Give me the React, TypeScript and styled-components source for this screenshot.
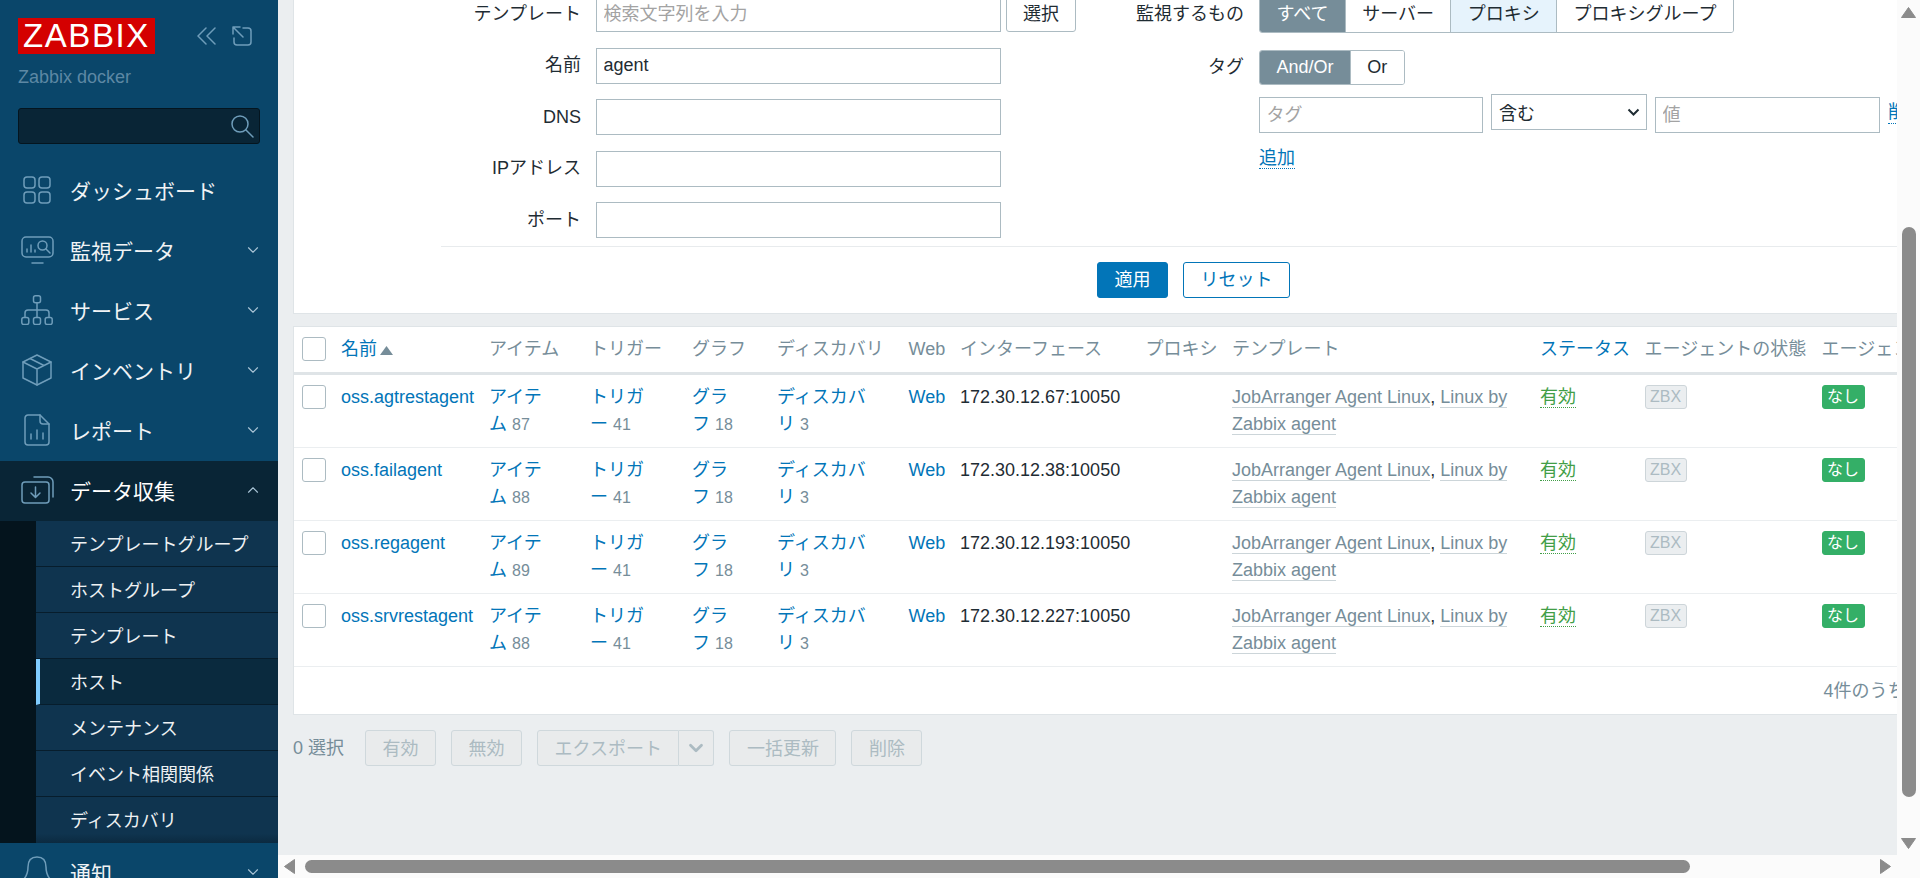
import * as React from "react";
import styled, { createGlobalStyle } from "styled-components";
import { ChevronDown, ChevronUp } from "lucide-react";

const GlobalStyle = createGlobalStyle`
  html, body {
    margin: 0;
    height: 100%;
    overflow: hidden;
    background: #ebeef0;
  }
  * { box-sizing: border-box; }
  body, input, select, button {
    font-family: "Liberation Sans", "Noto Sans CJK JP", sans-serif;
    font-size: 18px;
    color: #1f2c33;
  }
`;

const Shell = styled.div`
  display: flex;
  width: 1920px;
  height: 878px;
  overflow: hidden;
`;

/* ---- sidebar ---- */

const Sidebar = styled.aside`
  flex: 0 0 278px;
  height: 878px;
  overflow: hidden;
  background: #0a466a;
  padding-top: 18px;
`;

const BrandRow = styled.div`
  display: flex;
  align-items: center;
  padding-left: 18px;
  height: 36px;
`;

const Logo = styled.div`
  width: 137px;
  height: 36px;
  background: #d40000;
  color: #fff;
  font-size: 33px;
  line-height: 36px;
  letter-spacing: 1.6px;
  text-align: center;
`;

const BrandTools = styled.div`
  display: flex;
  align-items: center;
  gap: 15px;
  margin-left: 41px;
`;

const Subtitle = styled.div`
  margin: 10px 0 0 18px;
  height: 27px;
  line-height: 27px;
  color: #5d88a4;
`;

const SearchBox = styled.div`
  display: flex;
  align-items: center;
  justify-content: flex-end;
  width: 242px;
  height: 36px;
  margin: 17px 0 17px 18px;
  padding-right: 5px;
  background: #092536;
  border: 1px solid #04151f;
  border-radius: 3px;
`;

const NavItem = styled.div<{ $active?: boolean }>`
  display: flex;
  align-items: center;
  height: 60px;
  padding: 0 16px 2px 0;
  background: ${(p) => (p.$active ? "#092536" : "transparent")};
  color: ${(p) => (p.$active ? "#ffffff" : "#f0f3f5")};
  font-size: 21px;
`;

const NavIcon = styled.span`
  display: flex;
  justify-content: center;
  flex: 0 0 40px;
  margin: 0 13px 0 17px;
`;

const NavCaret = styled.span`
  display: flex;
  margin-left: auto;
  color: #a9c4d6;
`;

const SubMenu = styled.div`
  padding-left: 36px;
  background: #04141d;
`;

const SubItem = styled.div<{ $current?: boolean }>`
  height: 46px;
  display: flex;
  align-items: center;
  padding-bottom: 2px;
  padding-left: ${(p) => (p.$current ? "30px" : "34px")};
  border-left: ${(p) => (p.$current ? "4px solid #7fccff" : "none")};
  border-bottom: 1px solid #071d2c;
  background: ${(p) => (p.$current ? "#0a2a3e" : "#0f344f")};
  color: #eef1f3;
  &:last-child {
    border-bottom: none;
    background: linear-gradient(#0f344f 80%, #0b2a40);
  }
`;

const Line = styled.g`
  fill: none;
  stroke: #6f9dba;
  stroke-width: 1.5;
  stroke-linecap: round;
  stroke-linejoin: round;
`;

/* ---- main area ---- */

const Workspace = styled.div`
  flex: 1;
  min-width: 0;
  display: grid;
  grid-template-columns: 1619px 23px;
  grid-template-rows: 855px 23px;
`;

const Content = styled.main`
  overflow: hidden;
  background: #ebeef0;
  padding-left: 15px;
`;

const Panel = styled.section`
  width: 1812px;
  background: #fff;
  border: 1px solid #dfe4e7;
`;

const FilterPanel = styled(Panel)`
  margin-top: -4px;
  border-top: none;
  height: 318px;
`;

const FilterColumns = styled.div`
  display: flex;
  height: 250px;
`;

const LeftColumn = styled.div`
  display: flex;
  flex-direction: column;
  gap: 15.5px;
  flex: 0 0 806px;
`;

const RightColumn = styled.div`
  flex: 1;
`;

const FormRow = styled.div<{ $labelWidth: number; $top?: number }>`
  display: grid;
  grid-template-columns: ${(p) => p.$labelWidth}px 1fr;
  column-gap: 15px;
  align-items: center;
  margin-top: ${(p) => p.$top ?? 0}px;
`;

const FieldLabel = styled.label`
  text-align: right;
  line-height: 27px;
`;

const FieldLine = styled.div`
  display: flex;
  align-items: center;
  gap: 5px;
`;

const TextInput = styled.input<{ $width: number }>`
  width: ${(p) => p.$width}px;
  height: 36px;
  padding: 0 6.5px;
  background: #fff;
  border: 1px solid #acbbc2;
  outline: none;
  &::placeholder { color: #a3a3a3; opacity: 1; }
`;

const Button = styled.button<{ $primary?: boolean; $outline?: boolean; $narrow?: boolean }>`
  height: 36px;
  padding: 0 ${(p) => (p.$narrow ? "16px" : "16.5px")} 4px;
  border-radius: 3px;
  border: 1px solid ${(p) => (p.$primary || p.$outline ? "#0275b8" : "#acbbc2")};
  background: ${(p) => (p.$primary ? "#0275b8" : "#fff")};
  color: ${(p) => (p.$primary ? "#fff" : p.$outline ? "#0275b8" : "#1f2c33")};
`;

const Segments = styled.div`
  display: inline-flex;
  width: fit-content;
  border: 1px solid #acbbc2;
  border-radius: 3px;
  overflow: hidden;
`;

const Segment = styled.span<{ $on?: boolean; $tint?: boolean; $h: number }>`
  height: ${(p) => p.$h}px;
  line-height: ${(p) => p.$h}px;
  padding: 0 16.4px;
  background: ${(p) => (p.$on ? "#768d99" : p.$tint ? "#e6f3fc" : "#fff")};
  color: ${(p) => (p.$on ? "#fff" : "#1f2c33")};
  & + & { border-left: 1px solid #acbbc2; }
`;

const TagForm = styled.div`
  margin-left: 159px;
`;

const TagLine = styled.div`
  display: flex;
  align-items: flex-start;
  margin-top: 12px;
  white-space: nowrap;
`;

const SelectWrap = styled.div`
  position: relative;
  width: 156px;
  height: 36px;
  margin: -3px 8px 0 8px;
`;

const OperatorSelect = styled.select`
  appearance: none;
  display: block;
  width: 100%;
  height: 100%;
  padding: 4px 7px 0;
  background: #fff;
  border: 1px solid #acbbc2;
  border-radius: 0;
  outline: none;
`;

const SelectCaret = styled.svg`
  position: absolute;
  top: 14px;
  right: 7px;
  pointer-events: none;
`;

const ActionLink = styled.a<{ $spaced?: boolean }>`
  color: #0275b8;
  border-bottom: 1px dotted #0275b8;
  margin-left: ${(p) => (p.$spaced ? "8px" : "0")};
`;

const AddLine = styled.div`
  margin-top: 12px;
  line-height: 27px;
`;

const FilterDivider = styled.div`
  margin-left: 147px;
  border-top: 1px solid #e8ebed;
`;

const FilterActions = styled.div`
  display: flex;
  gap: 15px;
  margin: 15px 0 0 803px;
`;

const TablePanel = styled(Panel)`
  margin-top: 12px;
`;

const HostTable = styled.table`
  width: 1810px;
  table-layout: fixed;
  border-collapse: separate;
  border-spacing: 0;
`;

const HeadCell = styled.th<{ $link?: boolean }>`
  height: 48px;
  padding: 9px 7.5px;
  line-height: 27px;
  vertical-align: top;
  text-align: left;
  font-weight: 400;
  white-space: nowrap;
  color: ${(p) => (p.$link ? "#0275b8" : "#768d99")};
  border-bottom: 3px solid #dfe4e7;
`;

const Cell = styled.td`
  padding: 9px 7.5px;
  line-height: 27px;
  vertical-align: top;
  border-bottom: 1px solid #ebeef0;
`;

const Check = styled.span`
  display: block;
  width: 24px;
  height: 24px;
  margin-top: 1px;
  background: #fff;
  border: 1px solid #acbbc2;
  border-radius: 3px;
`;

const HostLink = styled.a`
  color: #0275b8;
`;

const Count = styled.span`
  color: #768d99;
  font-size: 16px;
`;

const SortMark = styled.svg`
  margin-left: 3px;
`;

const TemplateLink = styled.a`
  color: #768d99;
  border-bottom: 1px solid #ccd5d9;
`;

const StatusLink = styled.a`
  color: #429e47;
  border-bottom: 1px dotted #429e47;
`;

const Badge = styled.span<{ $green?: boolean }>`
  display: inline-block;
  height: 24px;
  line-height: 22px;
  padding: 0 4.5px;
  vertical-align: top;
  margin-top: 1px;
  font-size: 16px;
  border-radius: 3px;
  border: 1px solid ${(p) => (p.$green ? "#34af67" : "#cdd5d9")};
  background: ${(p) => (p.$green ? "#34af67" : "#ebeef0")};
  color: ${(p) => (p.$green ? "#fff" : "#acbbc2")};
`;

const TableFooter = styled.div`
  height: 47px;
  padding: 0 27px 3px 0;
  display: flex;
  align-items: center;
  justify-content: flex-end;
  color: #768d99;
`;

const BulkBar = styled.div`
  display: flex;
  align-items: center;
  gap: 15px;
  margin-top: 15px;
  white-space: nowrap;
`;

const SelectedCount = styled.span`
  width: 57px;
  padding-bottom: 4px;
  color: #768d99;
`;

const BulkButton = styled.span<{ $split?: boolean }>`
  display: flex;
  align-items: center;
  height: 36px;
  padding: 0 16.5px 3px;
  background: #e9ebec;
  color: #acbbc2;
  border: 1px solid #cfd8dc;
  border-radius: ${(p) => (p.$split ? "3px 0 0 3px" : "3px")};
`;

const BulkCaret = styled.span`
  display: flex;
  align-items: center;
  justify-content: center;
  width: 35px;
  height: 36px;
  background: #e9ebec;
  color: #acbbc2;
  border: 1px solid #cfd8dc;
  border-left: none;
  border-radius: 0 3px 3px 0;
`;

const SplitGroup = styled.div`
  display: flex;
`;

/* ---- scrollbars ---- */

const VBar = styled.div`
  background: #fbfbfb;
  display: flex;
  flex-direction: column;
  align-items: center;
  padding-top: 7px;
`;

const VThumb = styled.div`
  width: 14px;
  height: 570px;
  margin-top: 209px;
  border-radius: 7px;
  background: #8b8b8b;
`;

const HBar = styled.div`
  grid-column: 1 / span 2;
  background: #fbfbfb;
  display: flex;
  align-items: center;
  padding: 0 29px 0 6px;
`;

const HThumb = styled.div`
  width: 1385px;
  height: 13px;
  margin: 0 190px 0 10px;
  border-radius: 7px;
  background: #8b8b8b;
`;

const ArrowDown = styled.svg`
  margin-top: 41px;
`;

const hosts = [
  { name: "oss.agtrestagent", items: 87, ip: "172.30.12.67:10050" },
  { name: "oss.failagent", items: 88, ip: "172.30.12.38:10050" },
  { name: "oss.regagent", items: 89, ip: "172.30.12.193:10050" },
  { name: "oss.srvrestagent", items: 88, ip: "172.30.12.227:10050" },
];

const columnWidths = [39.5, 148, 101, 102, 85, 131.5, 51.5, 185.5, 86.5, 308, 104.5, 177, 290];

const subItems = [
  "テンプレートグループ",
  "ホストグループ",
  "テンプレート",
  "ホスト",
  "メンテナンス",
  "イベント相関関係",
  "ディスカバリ",
];

function DashboardIcon() {
  return (
    <svg width="28" height="28" viewBox="0 0 28 28">
      <Line>
        <rect x="1" y="1" width="11" height="11" rx="3" />
        <rect x="16" y="1" width="11" height="11" rx="3" />
        <rect x="1" y="16" width="11" height="11" rx="3" />
        <rect x="16" y="16" width="11" height="11" rx="3" />
      </Line>
    </svg>
  );
}

function MonitorIcon() {
  return (
    <svg width="33" height="28" viewBox="0 0 33 28">
      <Line>
        <path d="M16 21H5a4 4 0 0 1-4-4V5a4 4 0 0 1 4-4h23a4 4 0 0 1 4 4v12a4 4 0 0 1-4 4z" />
        <path d="M11 27h11" />
        <path d="M6 16v-3M10 16V9M14 16v-2" />
        <circle cx="21.5" cy="9.5" r="4.5" />
        <path d="M25 13l4 4" />
      </Line>
    </svg>
  );
}

function ServiceIcon() {
  return (
    <svg width="32" height="30" viewBox="0 0 32 30">
      <Line>
        <rect x="12.5" y="0.8" width="7" height="7" rx="2" />
        <path d="M16 8v14M4 22v-4a3 3 0 0 1 3-3h18a3 3 0 0 1 3 3v4" />
        <rect x="0.8" y="22.5" width="7" height="7" rx="2" />
        <rect x="12.5" y="22.5" width="7" height="7" rx="2" />
        <rect x="24.2" y="22.5" width="7" height="7" rx="2" />
      </Line>
    </svg>
  );
}

function InventoryIcon() {
  return (
    <svg width="30" height="32" viewBox="0 0 30 32">
      <Line>
        <path d="M15 1l14 7v16l-14 7-14-7V8z" />
        <path d="M1 8l14 7 14-7M15 15v16M8 4.5l14 7" />
      </Line>
    </svg>
  );
}

function ReportIcon() {
  return (
    <svg width="26" height="32" viewBox="0 0 26 32">
      <Line>
        <path d="M4 1h12l9 9v18a3 3 0 0 1-3 3H4a3 3 0 0 1-3-3V4a3 3 0 0 1 3-3z" />
        <path d="M16 1v6a3 3 0 0 0 3 3h6" />
        <path d="M7 25v-5M13 25v-9M19 25v-6" />
      </Line>
    </svg>
  );
}

function CollectIcon() {
  return (
    <svg width="33" height="28" viewBox="0 0 33 28">
      <Line>
        <rect x="1" y="6" width="27" height="21" rx="3" />
        <path d="M13 1h14a5 5 0 0 1 5 5v15" />
        <path d="M14.500 11v10M10 17l4.500 4.500L19 17" />
      </Line>
    </svg>
  );
}

function BellIcon() {
  return (
    <svg width="30" height="32" viewBox="0 0 30 32">
      <Line>
        <path d="M1 24C5 20 6 16 6 11C6 4 10 1 15 1S24 4 24 11C24 16 25 20 29 24" />
      </Line>
    </svg>
  );
}

export default function App() {
  return (
    <>
      <GlobalStyle />
      <Shell>
        <Sidebar>
          <BrandRow>
            <Logo>ZABBIX</Logo>
            <BrandTools>
              <svg width="21" height="18" viewBox="0 0 21 18">
                <Line>
                  <path d="M10 1L2 9l8 8M19 1l-8 8 8 8" />
                </Line>
              </svg>
              <svg width="20" height="20" viewBox="0 0 20 20">
                <Line>
                  <path d="M1 1h7M1 1v7M1 1l10 10" />
                  <path d="M11 2h5a3 3 0 0 1 3 3v11a3 3 0 0 1-3 3H5a3 3 0 0 1-3-3v-4" />
                </Line>
              </svg>
            </BrandTools>
          </BrandRow>
          <Subtitle>Zabbix docker</Subtitle>
          <SearchBox>
            <svg width="24" height="24" viewBox="0 0 24 24">
              <Line>
                <circle cx="10" cy="10" r="8" />
                <path d="M16 16l7 7" />
              </Line>
            </svg>
          </SearchBox>
          <NavItem>
            <NavIcon><DashboardIcon /></NavIcon>ダッシュボード
          </NavItem>
          <NavItem>
            <NavIcon><MonitorIcon /></NavIcon>監視データ
            <NavCaret><ChevronDown size={18} strokeWidth={1.5} /></NavCaret>
          </NavItem>
          <NavItem>
            <NavIcon><ServiceIcon /></NavIcon>サービス
            <NavCaret><ChevronDown size={18} strokeWidth={1.5} /></NavCaret>
          </NavItem>
          <NavItem>
            <NavIcon><InventoryIcon /></NavIcon>インベントリ
            <NavCaret><ChevronDown size={18} strokeWidth={1.5} /></NavCaret>
          </NavItem>
          <NavItem>
            <NavIcon><ReportIcon /></NavIcon>レポート
            <NavCaret><ChevronDown size={18} strokeWidth={1.5} /></NavCaret>
          </NavItem>
          <NavItem $active>
            <NavIcon><CollectIcon /></NavIcon>データ収集
            <NavCaret><ChevronUp size={18} strokeWidth={1.5} /></NavCaret>
          </NavItem>
          <SubMenu>
            {subItems.map((label) => (
              <SubItem key={label} $current={label === "ホスト"}>{label}</SubItem>
            ))}
          </SubMenu>
          <NavItem>
            <NavIcon><BellIcon /></NavIcon>通知
            <NavCaret><ChevronDown size={18} strokeWidth={1.5} /></NavCaret>
          </NavItem>
        </Sidebar>

        <Workspace>
          <Content>
            <FilterPanel>
              <FilterColumns>
                <LeftColumn>
                  <FormRow $labelWidth={287}>
                    <FieldLabel>テンプレート</FieldLabel>
                    <FieldLine>
                      <TextInput $width={405} placeholder="検索文字列を入力" readOnly />
                      <Button $narrow>選択</Button>
                    </FieldLine>
                  </FormRow>
                  <FormRow $labelWidth={287}>
                    <FieldLabel>名前</FieldLabel>
                    <TextInput $width={405} value="agent" readOnly />
                  </FormRow>
                  <FormRow $labelWidth={287}>
                    <FieldLabel>DNS</FieldLabel>
                    <TextInput $width={405} readOnly />
                  </FormRow>
                  <FormRow $labelWidth={287}>
                    <FieldLabel>IPアドレス</FieldLabel>
                    <TextInput $width={405} readOnly />
                  </FormRow>
                  <FormRow $labelWidth={287}>
                    <FieldLabel>ポート</FieldLabel>
                    <TextInput $width={405} readOnly />
                  </FormRow>
                </LeftColumn>
                <RightColumn>
                  <FormRow $labelWidth={144}>
                    <FieldLabel>監視するもの</FieldLabel>
                    <Segments>
                      <Segment $h={35} $on>すべて</Segment>
                      <Segment $h={35}>サーバー</Segment>
                      <Segment $h={35} $tint>プロキシ</Segment>
                      <Segment $h={35}>プロキシグループ</Segment>
                    </Segments>
                  </FormRow>
                  <FormRow $labelWidth={144} $top={17}>
                    <FieldLabel>タグ</FieldLabel>
                    <Segments>
                      <Segment $h={33} $on>And/Or</Segment>
                      <Segment $h={33}>Or</Segment>
                    </Segments>
                  </FormRow>
                  <TagForm>
                    <TagLine>
                      <TextInput $width={224} placeholder="タグ" readOnly />
                      <SelectWrap>
                        <OperatorSelect defaultValue="含む">
                          <option>含む</option>
                        </OperatorSelect>
                        <SelectCaret width="13" height="9" viewBox="0 0 13 9">
                          <path d="M1.500 1.500l5 5 5-5" fill="none" stroke="#1f2c33" strokeWidth="2" />
                        </SelectCaret>
                      </SelectWrap>
                      <TextInput $width={225} placeholder="値" readOnly />
                      <ActionLink $spaced>削除</ActionLink>
                    </TagLine>
                    <AddLine>
                      <ActionLink>追加</ActionLink>
                    </AddLine>
                  </TagForm>
                </RightColumn>
              </FilterColumns>
              <FilterDivider />
              <FilterActions>
                <Button $primary>適用</Button>
                <Button $outline>リセット</Button>
              </FilterActions>
            </FilterPanel>

            <TablePanel>
              <HostTable>
                <colgroup>
                  {columnWidths.map((w, i) => (
                    <col key={i} width={w} />
                  ))}
                </colgroup>
                <thead>
                  <tr>
                    <HeadCell><Check /></HeadCell>
                    <HeadCell $link>
                      名前
                      <SortMark width="13" height="9" viewBox="0 0 13 9">
                        <path d="M6.500 0L13 9H0z" fill="#768d99" />
                      </SortMark>
                    </HeadCell>
                    <HeadCell>アイテム</HeadCell>
                    <HeadCell>トリガー</HeadCell>
                    <HeadCell>グラフ</HeadCell>
                    <HeadCell>ディスカバリ</HeadCell>
                    <HeadCell>Web</HeadCell>
                    <HeadCell>インターフェース</HeadCell>
                    <HeadCell>プロキシ</HeadCell>
                    <HeadCell>テンプレート</HeadCell>
                    <HeadCell $link>ステータス</HeadCell>
                    <HeadCell>エージェントの状態</HeadCell>
                    <HeadCell>エージェント暗号化</HeadCell>
                  </tr>
                </thead>
                <tbody>
                  {hosts.map((host) => (
                    <tr key={host.name}>
                      <Cell><Check /></Cell>
                      <Cell><HostLink>{host.name}</HostLink></Cell>
                      <Cell><HostLink>アイテム{"\u00a0"}</HostLink><Count>{host.items}</Count></Cell>
                      <Cell><HostLink>トリガー{"\u00a0"}</HostLink><Count>41</Count></Cell>
                      <Cell><HostLink>グラフ{"\u00a0"}</HostLink><Count>18</Count></Cell>
                      <Cell><HostLink>ディスカバリ{"\u00a0"}</HostLink><Count>3</Count></Cell>
                      <Cell><HostLink>Web</HostLink></Cell>
                      <Cell>{host.ip}</Cell>
                      <Cell />
                      <Cell>
                        <TemplateLink>JobArranger Agent Linux</TemplateLink>, <TemplateLink>Linux by Zabbix agent</TemplateLink>
                      </Cell>
                      <Cell><StatusLink>有効</StatusLink></Cell>
                      <Cell><Badge>ZBX</Badge></Cell>
                      <Cell><Badge $green>なし</Badge></Cell>
                    </tr>
                  ))}
                </tbody>
              </HostTable>
              <TableFooter>4件のうち4件を表示しています</TableFooter>
            </TablePanel>

            <BulkBar>
              <SelectedCount>0 選択</SelectedCount>
              <BulkButton>有効</BulkButton>
              <BulkButton>無効</BulkButton>
              <SplitGroup>
                <BulkButton $split>エクスポート</BulkButton>
                <BulkCaret><ChevronDown size={22} strokeWidth={3} /></BulkCaret>
              </SplitGroup>
              <BulkButton>一括更新</BulkButton>
              <BulkButton>削除</BulkButton>
            </BulkBar>
          </Content>

          <VBar>
            <svg width="15" height="11" viewBox="0 0 15 11">
              <path d="M7.500 0.500L14.500 10.500H0.500z" fill="#8b8b8b" stroke="#8b8b8b" strokeLinejoin="round" />
            </svg>
            <VThumb />
            <ArrowDown width="15" height="11" viewBox="0 0 15 11">
              <path d="M0.500 0.500H14.500L7.500 10.500z" fill="#8b8b8b" stroke="#8b8b8b" strokeLinejoin="round" />
            </ArrowDown>
          </VBar>
          <HBar>
            <svg width="11" height="15" viewBox="0 0 11 15">
              <path d="M10.500 0.500V14.500L0.500 7.500z" fill="#8b8b8b" stroke="#8b8b8b" strokeLinejoin="round" />
            </svg>
            <HThumb />
            <svg width="11" height="15" viewBox="0 0 11 15">
              <path d="M0.500 0.500V14.500L10.500 7.500z" fill="#8b8b8b" stroke="#8b8b8b" strokeLinejoin="round" />
            </svg>
          </HBar>
        </Workspace>
      </Shell>
    </>
  );
}
